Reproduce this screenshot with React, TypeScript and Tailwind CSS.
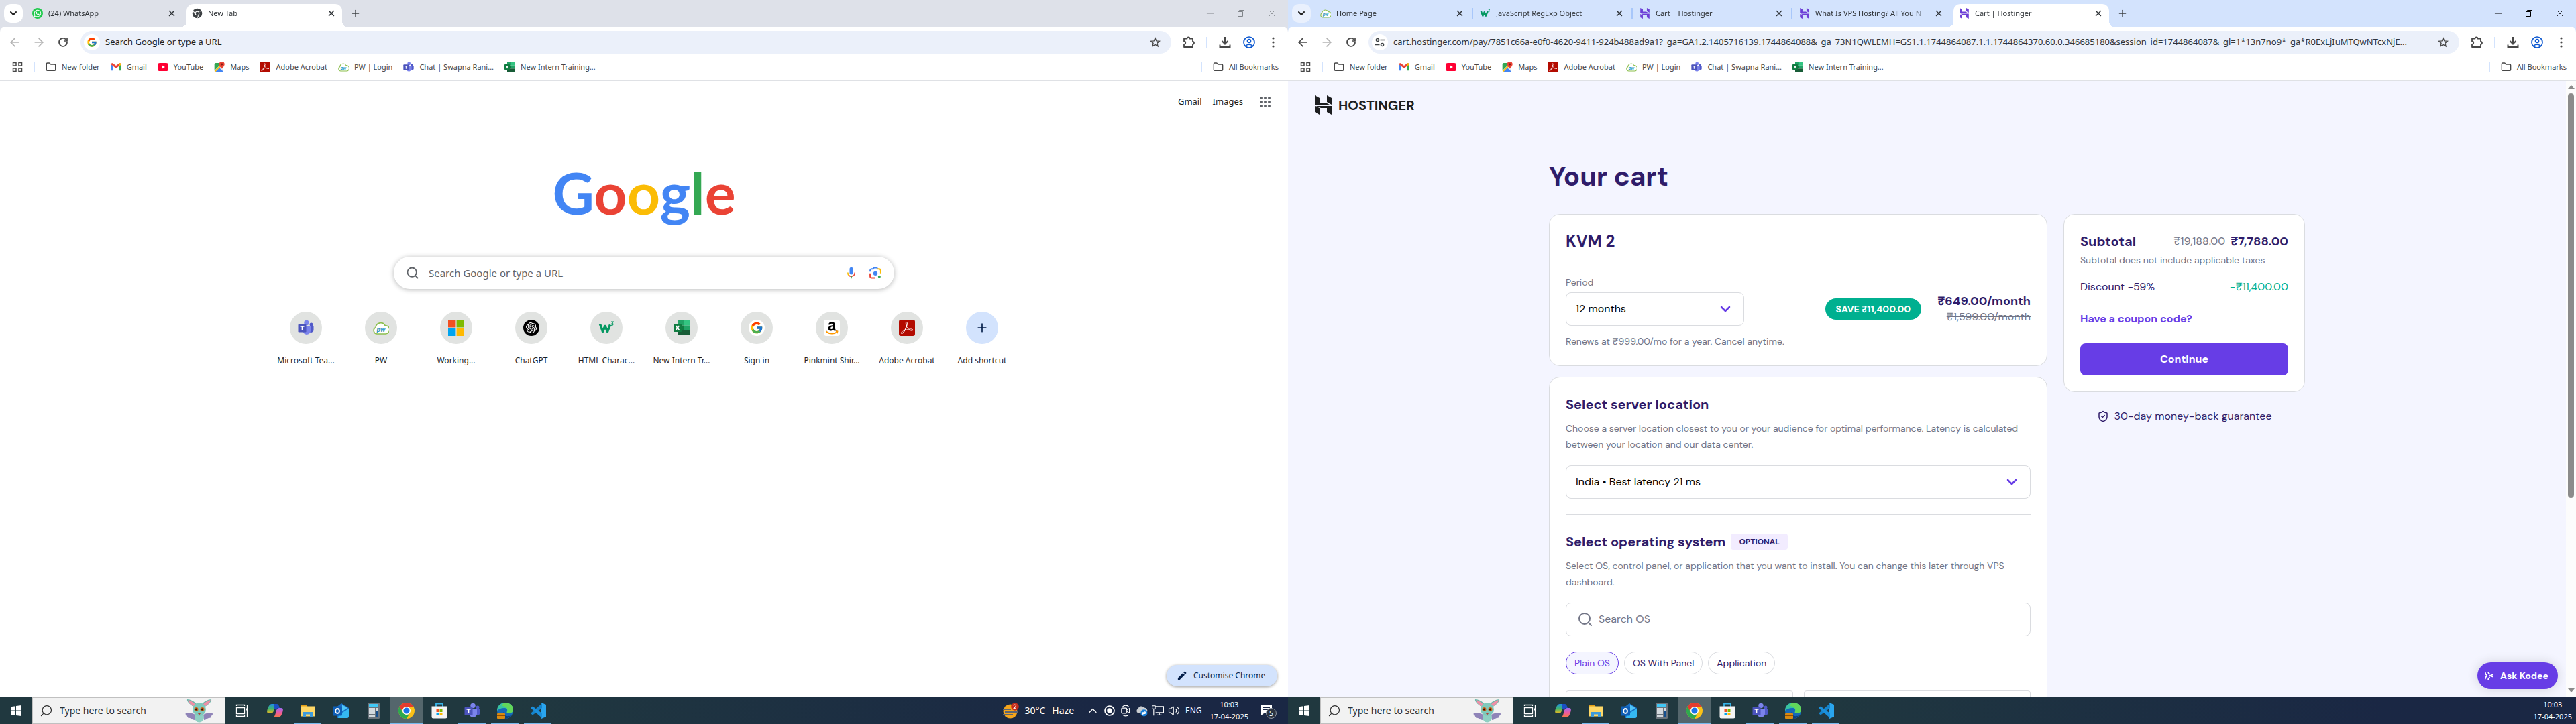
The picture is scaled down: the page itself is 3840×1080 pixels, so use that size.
import type { ReactNode } from "react";
import {
  SiAdobeacrobatreader,
  SiHostinger,
  SiOpenai,
} from "react-icons/si";
import { FaAmazon, FaWhatsapp } from "react-icons/fa6";
import { FcGoogle } from "react-icons/fc";
import {
  ArrowLeft,
  ArrowRight,
  ChevronDown,
  ChevronUp,
  Folder,
  Minus,
  Plus,
  Search,
  ShieldCheck,
  Volume2,
  X,
} from "lucide-react";

/* ---------- brand and system drawings ---------- */

type IconProps = { className?: string };

const WhatsApp = ({ className = "size-4" }: IconProps) => (
  <span className={`flex items-center justify-center rounded-full bg-[#1fc94c] text-white ${className}`}>
    <FaWhatsapp className="size-3" />
  </span>
);

const ChromeMono = () => (
  <svg viewBox="0 0 24 24" className="size-4 text-[#3c4043]">
    <circle cx="12" cy="12" r="11" fill="currentColor" />
    <path d="M12 7h10M7.7 14.5L2.8 6M16.3 14.5L11.5 23" stroke="#fff" strokeWidth="1.6" />
    <circle cx="12" cy="12" r="5" fill="#fff" />
    <circle cx="12" cy="12" r="3.4" fill="currentColor" />
  </svg>
);

const ChromeColor = () => (
  <svg viewBox="0 0 24 24" className="size-6">
    <circle cx="12" cy="12" r="12" fill="#fbc116" />
    <path d="M12 0a12 12 0 0 1 10.4 6H12a6 6 0 0 0-5.2 9L1.6 6A12 12 0 0 1 12 0z" fill="#e33b2e" />
    <path d="M1.6 6l5.2 9a6 6 0 0 0 10.4 0L12 24A12 12 0 0 1 1.6 6z" fill="#2da94f" />
    <circle cx="12" cy="12" r="6" fill="#fff" />
    <circle cx="12" cy="12" r="4.6" fill="#1a73e8" />
  </svg>
);

const Gmail = () => (
  <svg viewBox="0 0 24 24" className="size-4">
    <path d="M1 20V6l5 4v10z" fill="#4285f4" />
    <path d="M23 20V6l-5 4v10z" fill="#34a853" />
    <path d="M1 6.500V6c0-2.500 2.500-3.500 4.500-2L12 9l6.500-5C20.500 2.500 23 3.500 23 6v.5L12 15z" fill="#ea4335" />
    <path d="M18 4.400C20.500 2.500 23 3.500 23 6v1.500l-5 3.500z" fill="#fbbc04" />
  </svg>
);

const YouTube = () => (
  <svg viewBox="0 0 24 24" className="size-4">
    <rect y="3" width="24" height="18" rx="5" fill="#f03" />
    <path d="M9.500 8l7 4-7 4z" fill="#fff" />
  </svg>
);

const Maps = () => (
  <svg viewBox="0 0 24 24" className="size-4">
    <rect x="1" y="3" width="20" height="20" rx="3" fill="#e8eaed" />
    <path d="M1 20L18 3H4a3 3 0 0 0-3 3z" fill="#34a853" />
    <path d="M3 23L12 14l9 8a3 3 0 0 1-2 1z" fill="#4285f4" />
    <path d="M2 22L20 4" stroke="#fbbc04" strokeWidth="3" />
    <path d="M17.500 0a6 6 0 0 1 6 6c0 4-6 9.500-6 9.500S11.500 10 11.500 6a6 6 0 0 1 6-6z" fill="#ea4335" />
    <circle cx="17.500" cy="6" r="2.200" fill="#7f1d12" />
  </svg>
);

const Acrobat = ({ className = "size-4" }: IconProps) => (
  <span className={`flex items-center justify-center rounded-[3px] bg-[#b30b00] text-white ${className}`}>
    <SiAdobeacrobatreader className="size-3/4" />
  </span>
);

const Pw = ({ className = "size-4" }: IconProps) => (
  <svg viewBox="0 0 24 24" className={className}>
    <path
      d="M6 21a5 5 0 0 1-2-9.500A7.500 7.500 0 0 1 18 8.500a6 6 0 0 1 1 12.500z"
      fill="#fff"
      stroke="#8cbf4d"
      strokeWidth="1.600"
    />
    <text x="12" y="17.500" textAnchor="middle" fontFamily="Lato" fontStyle="italic" fontWeight="900" fontSize="10" fill="#2b9bc4">
      pw
    </text>
  </svg>
);

const Teams = ({ className = "size-4" }: IconProps) => (
  <svg viewBox="0 0 24 24" className={className}>
    <circle cx="20" cy="7" r="2.500" fill="#5059c9" />
    <path d="M17 10h6.500v6a4 4 0 0 1-6.500 2z" fill="#5059c9" />
    <circle cx="13" cy="4.500" r="3.700" fill="#7b83eb" />
    <path d="M8 10h11v7a6 6 0 0 1-11 2z" fill="#7b83eb" />
    <rect x="0.500" y="6.500" width="12" height="12" rx="1.200" fill="#4b53bc" />
    <path d="M3.500 10h6M6.500 10v6" stroke="#fff" strokeWidth="1.700" />
  </svg>
);

const Excel = ({ className = "size-4" }: IconProps) => (
  <svg viewBox="0 0 24 24" className={className}>
    <rect x="6" y="1" width="9" height="7.500" fill="#21a366" />
    <rect x="15" y="1" width="9" height="7.500" fill="#33c481" />
    <rect x="6" y="8.500" width="9" height="7" fill="#107c41" />
    <rect x="15" y="8.500" width="9" height="7" fill="#21a366" />
    <rect x="6" y="15.500" width="18" height="7.500" fill="#185c37" />
    <rect x="0" y="6" width="12" height="12" rx="1" fill="#107c41" />
    <path d="M3.500 9l5 6.500M8.500 9l-5 6.500" stroke="#fff" strokeWidth="1.700" />
  </svg>
);

const Microsoft = ({ className = "size-6" }: IconProps) => (
  <svg viewBox="0 0 24 24" className={className}>
    <path d="M0 0h11.400v11.400H0z" fill="#f25022" />
    <path d="M12.600 0H24v11.400H12.600z" fill="#7fba00" />
    <path d="M0 12.600h11.400V24H0z" fill="#00a4ef" />
    <path d="M12.600 12.600H24V24H12.600z" fill="#ffb900" />
  </svg>
);

const W3 = ({ className = "size-4" }: IconProps) => (
  <svg viewBox="0 0 24 24" className={className}>
    <path d="M2.500 6.500l4 11 3.500-8 3.500 8 4-10" fill="none" stroke="#059862" strokeWidth="3.600" strokeLinejoin="round" />
    <path d="M19 3h3.200l-1.800 2.300c2 0 2.300 2.900-.2 3.100-.8 0-1.200-.2-1.500-.7" fill="none" stroke="#059862" strokeWidth="1.200" />
  </svg>
);

const HostingerMark = () => <SiHostinger className="size-4 text-[#6d3fd6]" />;

const AppsGrid = () => (
  <svg viewBox="0 0 16 16" className="size-4" fill="none" stroke="#474747" strokeWidth="1.500">
    <rect x="1.500" y="1.500" width="4.500" height="4.500" />
    <rect x="10" y="1.500" width="4.500" height="4.500" />
    <rect x="1.500" y="10" width="4.500" height="4.500" />
    <rect x="10" y="10" width="4.500" height="4.500" />
  </svg>
);

const Reload = () => (
  <svg viewBox="0 0 20 20" className="size-5" fill="none" stroke="#474747" strokeWidth="1.700">
    <path d="M15.500 7.500A6 6 0 1 0 16 10" />
    <path d="M16 3.500v4.500h-4.500" />
  </svg>
);

const Tune = () => (
  <svg viewBox="0 0 16 16" className="size-4" fill="none" stroke="#3c4043" strokeWidth="1.600">
    <circle cx="4.500" cy="4.500" r="2" />
    <path d="M8.500 4.500H15M1 11.500h6.500" />
    <circle cx="11.500" cy="11.500" r="2" />
  </svg>
);

const Star = () => (
  <svg viewBox="0 0 20 20" className="size-4" fill="none" stroke="#474747" strokeWidth="1.800">
    <path d="M10 2.200l2.300 5.200 5.700.5-4.300 3.800 1.300 5.600-5-3-5 3 1.300-5.600L2 7.900l5.700-.5z" />
  </svg>
);

const Puzzle = () => (
  <svg viewBox="0 0 20 20" className="size-5" fill="none" stroke="#474747" strokeWidth="1.800">
    <path d="M3 4.500h4.500a2 2 0 0 1 4 0H16v4.300a2 2 0 0 1 0 4V17H3v-4c3 0 3-4.500 0-4.500z" strokeLinejoin="round" />
  </svg>
);

const Download = () => (
  <svg viewBox="0 0 20 20" className="size-5" fill="none" stroke="#474747" strokeWidth="2">
    <path d="M10 2v10M5.500 8l4.500 4.500L14.500 8M2.500 13.500V17h15v-3.500" />
  </svg>
);

const Profile = () => (
  <svg viewBox="0 0 20 20" className="size-5" fill="none" stroke="#0b57d0" strokeWidth="1.700">
    <circle cx="10" cy="10" r="8" />
    <circle cx="10" cy="8" r="2.500" />
    <path d="M4.500 15.500c2.500-3 8.500-3 11 0" />
  </svg>
);

const Dots = () => (
  <svg viewBox="0 0 20 20" className="size-5" fill="#474747">
    <circle cx="10" cy="4" r="1.600" />
    <circle cx="10" cy="10" r="1.600" />
    <circle cx="10" cy="16" r="1.600" />
  </svg>
);

const Restore = () => (
  <svg viewBox="0 0 12 12" className="size-3" fill="none" stroke="currentColor">
    <path d="M1.500 3.500h7v7h-7zM3.500 3V1.500h7v7H9" />
  </svg>
);

/* ---------- browser chrome ---------- */

type Tab = { icon: ReactNode; title: string };

function TabStrip({ tabs, focused }: { tabs: Tab[]; focused: boolean }) {
  const last = tabs.length - 1;
  return (
    <div className={`flex h-10 shrink-0 items-start pl-1.5 pt-1.5 ${focused ? "bg-[#d3e3fd]" : "bg-[#dee1e9]"}`}>
      <button
        aria-label="Search tabs"
        className={`mr-1.5 flex size-7 items-center justify-center rounded-[10px] ${focused ? "bg-[#e9f0fd]" : "bg-white"}`}
      >
        <ChevronDown className="size-4 text-[#1f1f1f]" strokeWidth={3} />
      </button>
      <div className="flex gap-1.5">
        {tabs.map((tab, i) => (
          <div
            key={i}
            className={`relative flex h-[34px] w-[232px] items-start rounded-t-[10px] px-2 pt-1.5 ${i === last ? "bg-white" : ""}`}
          >
            {i === last && (
              <>
                <span className="absolute -left-2 bottom-0 size-2 bg-[radial-gradient(circle_at_0_0,transparent_8px,white_8px)]" />
                <span className="absolute -right-2 bottom-0 size-2 bg-[radial-gradient(circle_at_100%_0,transparent_8px,white_8px)]" />
              </>
            )}
            {i < last - 1 && <span className="absolute -right-1 top-1.5 h-4 w-0.5 bg-[#a8c7fa]" />}
            <span className="flex size-4 shrink-0 items-center justify-center">{tab.icon}</span>
            <span className="mx-2 min-w-0 flex-1 whitespace-nowrap text-[11px] leading-4 text-[#303438] [mask-image:linear-gradient(to_right,black_85%,transparent)]">
              {tab.title}
            </span>
            <button aria-label="Close tab" className="flex size-4 items-center justify-center text-[#303438]">
              <X className="size-3.5" strokeWidth={2.5} />
            </button>
          </div>
        ))}
      </div>
      <button aria-label="New tab" className="ml-3 mt-1.5 flex size-4 items-center justify-center text-[#3c4043]">
        <Plus className="size-4" />
      </button>
      <div className={`ml-auto flex h-7 items-center gap-8 pr-4 ${focused ? "text-black" : "text-[#808489]"}`}>
        <button aria-label="Minimise">
          <Minus className="size-4" strokeWidth={1.5} />
        </button>
        <button aria-label="Restore">
          <Restore />
        </button>
        <button aria-label="Close">
          <X className="size-4" strokeWidth={1.2} />
        </button>
      </div>
    </div>
  );
}

const bookmarks: Tab[] = [
  { icon: <Folder className="size-4 text-[#474747]" strokeWidth={2} />, title: "New folder" },
  { icon: <Gmail />, title: "Gmail" },
  { icon: <YouTube />, title: "YouTube" },
  { icon: <Maps />, title: "Maps" },
  { icon: <Acrobat />, title: "Adobe Acrobat" },
  { icon: <Pw />, title: "PW | Login" },
  { icon: <Teams />, title: "Chat | Swapna Rani..." },
  { icon: <Excel />, title: "New Intern Training..." },
];

function Toolbar({ focused, url, hint, badge }: { focused: boolean; url?: string; hint?: string; badge: ReactNode }) {
  return (
    <div className={focused ? "bg-[#d3e3fd]" : "bg-[#dee1e9]"}>
      <div className="rounded-t-lg bg-white">
        <div className="flex h-10 items-center gap-4 px-3 pt-1.5">
          <button aria-label="Back">
            <ArrowLeft className={`size-5 ${focused ? "text-[#474747]" : "text-[#b4b4b4]"}`} />
          </button>
          <button aria-label="Forward">
            <ArrowRight className="size-5 text-[#b4b4b4]" />
          </button>
          <button aria-label="Reload">
            <Reload />
          </button>
          <div className="flex h-[34px] min-w-0 flex-1 items-center rounded-full bg-[#ebf0fa] pl-[5px] pr-4">
            <span className="flex size-6 shrink-0 items-center justify-center rounded-full bg-white">{badge}</span>
            <input
              aria-label="Address"
              defaultValue={url}
              placeholder={hint}
              className="mx-2 min-w-0 flex-1 text-ellipsis bg-transparent text-[13px] text-[#303438] outline-none placeholder:text-[#1f1f1f]"
            />
            <button aria-label="Bookmark this tab">
              <Star />
            </button>
          </div>
          <button aria-label="Extensions">
            <Puzzle />
          </button>
          <span className="h-4 w-0.5 bg-[#d3e3fd]" />
          <button aria-label="Downloads">
            <Download />
          </button>
          <button aria-label="Profile">
            <Profile />
          </button>
          <button aria-label="Menu">
            <Dots />
          </button>
        </div>
        <nav className="flex h-[41px] items-center gap-4 border-b border-[#dfe1e5] pl-[18px] pr-3.5 text-[11px] text-[#474747]">
          <AppsGrid />
          <span className="h-4 w-0.5 bg-[#d3e3fd]" />
          {bookmarks.map((b) => (
            <a key={b.title} href="#" className="flex items-center gap-2">
              {b.icon}
              {b.title}
            </a>
          ))}
          <span className="ml-auto h-4 w-0.5 bg-[#d3e3fd]" />
          <a href="#" className="flex items-center gap-2">
            <Folder className="size-4 text-[#474747]" />
            All Bookmarks
          </a>
        </nav>
      </div>
    </div>
  );
}

/* ---------- new tab page ---------- */

const shortcuts: Tab[] = [
  { icon: <Teams className="size-6" />, title: "Microsoft Tea..." },
  { icon: <Pw className="size-6" />, title: "PW" },
  { icon: <Microsoft />, title: "Working..." },
  {
    icon: (
      <span className="flex size-6 items-center justify-center rounded-full bg-black text-white">
        <SiOpenai className="size-4" />
      </span>
    ),
    title: "ChatGPT",
  },
  { icon: <W3 className="size-6" />, title: "HTML Charac..." },
  { icon: <Excel className="size-6" />, title: "New Intern Tr..." },
  {
    icon: (
      <span className="flex size-6 items-center justify-center rounded-full bg-white">
        <FcGoogle className="size-5" />
      </span>
    ),
    title: "Sign in",
  },
  {
    icon: (
      <span className="relative flex size-6 items-center justify-center rounded-[4px] bg-white text-black">
        <FaAmazon className="size-5" />
        <svg viewBox="0 0 24 24" className="absolute inset-0 size-6" fill="none">
          <path d="M2 17h20v5H2z" fill="#fff" />
          <path d="M3.500 17.500c5 4 12 4 16.500.5M18 17l2.500.5-.8 2.700" stroke="#ff9900" strokeWidth="1.800" />
        </svg>
      </span>
    ),
    title: "Pinkmint Shir...",
  },
  { icon: <Acrobat className="size-6" />, title: "Adobe Acrobat" },
  { icon: <Plus className="size-5 text-[#041e49]" />, title: "Add shortcut" },
];

function NewTabPage() {
  return (
    <main className="relative flex min-h-0 flex-1 flex-col items-center bg-white">
      <header className="flex h-[62px] w-full shrink-0 items-center justify-end gap-4 pr-[25px] text-[13px] text-[#1f1f1f]">
        <a href="#">Gmail</a>
        <a href="#">Images</a>
        <svg viewBox="0 0 18 18" className="ml-2 size-[18px]" fill="#5f6368">
          {[3, 9, 15].map((y) => [3, 9, 15].map((x) => <circle key={`${x}-${y}`} cx={x} cy={y} r="2" />))}
        </svg>
      </header>
      <h1 className="pt-2 font-['Lato'] text-[86px] font-bold leading-[192px]">
        <span className="text-[#4285f4]">G</span>
        <span className="text-[#ea4335]">o</span>
        <span className="text-[#fbbc05]">o</span>
        <span className="text-[#4285f4]">g</span>
        <span className="text-[#34a853]">l</span>
        <span className="text-[#ea4335]">e</span>
      </h1>
      <form className="flex h-12 w-[746px] items-center rounded-full bg-white pl-[18px] pr-[18px] shadow-[0_1px_6px_1px_rgba(32,33,36,0.26)]">
        <Search className="size-5 text-[#5f6368]" strokeWidth={2.2} />
        <input
          aria-label="Search Google"
          placeholder="Search Google or type a URL"
          className="mx-3.5 min-w-0 flex-1 bg-transparent text-[15px] outline-none placeholder:text-[#5f6368]"
        />
        <button type="button" aria-label="Voice search">
          <svg viewBox="0 0 24 24" className="size-5">
            <rect x="9" y="2" width="6" height="13" rx="3" fill="#4285f4" />
            <path d="M5.800 11.500c0 3 1 4.500 2.200 5.300" fill="none" stroke="#fbbc04" strokeWidth="2" />
            <path d="M7.500 16.500c3 2.300 6 2.300 9 0 1.200-1 1.800-3 1.800-5" fill="none" stroke="#ea4335" strokeWidth="2" />
            <path d="M12 18v4" stroke="#34a853" strokeWidth="2" />
          </svg>
        </button>
        <button type="button" aria-label="Search by image" className="ml-4">
          <svg viewBox="0 0 24 24" className="size-5" fill="none" strokeWidth="2.400">
            <path d="M2.500 10V8a3 3 0 0 1 3-3H8l1.500-2h5L16 5" stroke="#4285f4" />
            <path d="M16 5h2.500a3 3 0 0 1 3 3v5" stroke="#fbbc04" />
            <path d="M2.500 13v5a3 3 0 0 0 3 3H12" stroke="#ea4335" />
            <circle cx="12" cy="13" r="3.800" fill="#4285f4" />
            <circle cx="19" cy="19" r="2.400" fill="#34a853" />
          </svg>
        </button>
      </form>
      <ul className="mt-[34px] flex">
        {shortcuts.map((s, i) => (
          <li key={s.title} className="w-28 text-center text-xs text-[#1f1f1f]">
            <a href="#" className="flex flex-col items-center">
              <span
                className={`flex size-12 items-center justify-center rounded-full ${i === shortcuts.length - 1 ? "bg-[#d3e3fd]" : "bg-[#e1e3e1]"}`}
              >
                {s.icon}
              </span>
              <span className="mt-4 leading-[18px]">{s.title}</span>
            </a>
          </li>
        ))}
      </ul>
      <button className="absolute bottom-4 right-4 flex h-8 w-[165px] items-center gap-2.5 rounded-full bg-[#d3e3fd] pl-4 text-xs text-[#041e49] shadow-[0_1px_4px_rgba(0,0,0,0.4)]">
        <svg viewBox="0 0 16 16" className="size-3.5" fill="currentColor">
          <path d="M1 12l8.500-8.500 3 3L4 15H1zM10.500 2.500l1.500-1.500a1 1 0 0 1 1.500 0L15 2.500a1 1 0 0 1 0 1.500L13.500 5.500z" />
        </svg>
        Customise Chrome
      </button>
    </main>
  );
}

/* ---------- cart page ---------- */

function SelectBox({ id, label, value, className }: { id: string; label?: string; value: string; className: string }) {
  return (
    <div className={`relative h-[50px] ${className}`}>
      <select
        id={id}
        aria-label={label}
        defaultValue={value}
        className="size-full appearance-none rounded-lg border border-[#dadce0] bg-white pl-3.5 pr-12 text-base text-black"
      >
        <option>{value}</option>
      </select>
      <ChevronDown
        className="pointer-events-none absolute right-4 top-[13px] size-6 text-[#673de6]"
        strokeWidth={2.5}
      />
    </div>
  );
}

const osKinds = ["Plain OS", "OS With Panel", "Application"];

function CartPage() {
  return (
    <div className="flex min-h-0 flex-1">
      <div className="relative min-w-0 flex-1 overflow-hidden bg-[#f4f5ff] font-['DM_Sans','Open_Sans',sans-serif] text-[#2f1c6a]">
        <header className="flex items-center gap-2.5 pl-10 pt-[21px] text-[#1d1e20]">
          <svg viewBox="0 0 25 29" className="h-[29px] w-[25px]" fill="currentColor">
            <path d="M0 0l7 4v7l9 0 8 4H0zM18 0l7 4v10l-7-4zM25 29l-7-4v-6H9l-8-3h24zM0 16l7 3v10l-7-4z" />
          </svg>
          <span className="text-xl font-bold leading-7">HOSTINGER</span>
        </header>
        <main className="mx-auto max-w-[1127px] pt-[68px]">
          <h1 className="text-[40px] font-bold leading-[48px]">Your cart</h1>
          <div className="mt-8 grid grid-cols-[1fr_360px] items-start gap-6">
            <div className="flex flex-col gap-4">
              <section className="rounded-2xl border border-[#dadce0] bg-white p-6">
                <h2 className="text-2xl font-bold leading-8">KVM 2</h2>
                <hr className="mb-4 mt-4 border-[#dadce0]" />
                <label htmlFor="period" className="block text-sm leading-6 text-[#727586]">
                  Period
                </label>
                <div className="mt-[3px] flex items-center">
                  <SelectBox id="period" value="12 months" className="w-[266px]" />
                  <span className="ml-auto mr-6 rounded-full bg-[#00b090] px-4 text-sm font-bold leading-8 text-white">
                    SAVE ₹11,400.00
                  </span>
                  <div className="text-right leading-6">
                    <p className="text-lg font-bold leading-6">₹649.00/month</p>
                    <p className="text-base leading-6 text-[#727586] line-through">₹1,599.00/month</p>
                  </div>
                </div>
                <p className="mt-[11px] text-sm leading-6 text-[#727586]">Renews at ₹999.00/mo for a year. Cancel anytime.</p>
              </section>

              <section className="rounded-2xl border border-[#dadce0] bg-white p-6">
                <h2 className="text-xl font-bold leading-8">Select server location</h2>
                <p className="mt-2 text-sm leading-6 text-[#727586]">
                  Choose a server location closest to you or your audience for optimal performance. Latency is calculated
                  between your location and our data center.
                </p>
                <SelectBox
                  id="location"
                  label="Server location"
                  value="India • Best latency 21 ms"
                  className="mt-[19px] w-full"
                />
                <hr className="mt-[23px] border-[#dadce0]" />
                <div className="mt-6 flex items-center gap-2">
                  <h2 className="text-xl font-bold leading-8">Select operating system</h2>
                  <span className="rounded bg-[#f2ecff] px-3 text-xs font-bold leading-6">OPTIONAL</span>
                </div>
                <p className="mt-2 text-sm leading-6 text-[#727586]">
                  Select OS, control panel, or application that you want to install. You can change this later through VPS
                  dashboard.
                </p>
                <label className="mt-[19px] flex h-[50px] items-center gap-2 rounded-lg border border-[#dadce0] pl-4">
                  <Search className="size-6 text-[#727586]" />
                  <input
                    aria-label="Search OS"
                    placeholder="Search OS"
                    className="min-w-0 flex-1 bg-transparent text-base outline-none placeholder:text-[#727586]"
                  />
                </label>
                <div className="mt-[23px] flex gap-2">
                  {osKinds.map((kind, i) => (
                    <button
                      key={kind}
                      className={`h-[34px] rounded-full border px-3 text-sm ${i === 0 ? "border-[#673de6] bg-[#f4f5ff] text-[#673de6]" : "border-[#dadce0] bg-white"}`}
                    >
                      {kind}
                    </button>
                  ))}
                </div>
                <div className="mt-6 grid grid-cols-2 gap-4">
                  <div className="h-24 rounded border border-[#dadce0]" />
                  <div className="h-24 rounded border border-[#dadce0]" />
                </div>
              </section>
            </div>

            <aside>
              <section className="rounded-2xl border border-[#dadce0] bg-white p-6">
                <div className="flex items-center leading-8">
                  <h2 className="mr-auto text-xl font-bold leading-8">Subtotal</h2>
                  <s className="mr-2 text-base text-[#727586]">₹19,188.00</s>
                  <strong className="text-lg font-bold">₹7,788.00</strong>
                </div>
                <p className="text-sm leading-6 text-[#727586]">Subtotal does not include applicable taxes</p>
                <div className="mt-4 flex justify-between text-base leading-6">
                  <span>Discount -59%</span>
                  <span className="text-[#00b090]">-₹11,400.00</span>
                </div>
                <a href="#" className="mt-6 block text-base font-bold leading-6 text-[#673de6]">
                  Have a coupon code?
                </a>
                <button className="mt-6 h-12 w-full rounded-lg bg-[#673de6] text-base font-bold text-white">Continue</button>
              </section>
              <p className="mt-6 flex items-center justify-center gap-2 text-base leading-6">
                <ShieldCheck className="size-[18px]" />
                30-day money-back guarantee
              </p>
            </aside>
          </div>
        </main>
        <button className="absolute bottom-3 right-3 flex h-10 w-[120px] items-center gap-2.5 rounded-full bg-[#673de6] pl-2.5 text-sm font-bold text-white shadow-[0_0_16px_rgba(29,30,32,0.16)]">
          <svg viewBox="0 0 16 16" className="size-3.5" fill="none" stroke="currentColor" strokeWidth="2">
            <path d="M2 2c0 3 .5 4 2.500 5.500M2 14c0-3 .5-4 2.500-5.500M7 1c0 2 1 3.500 3 4.500M7 15c0-2 1-3.500 3-4.500M9 8c3 0 4-1 6-2M9 8c3 0 4 1 6 2" />
          </svg>
          Ask Kodee
        </button>
      </div>
      <div className="flex w-[15px] flex-col items-center bg-[#fcfcfc] pb-[7px] pt-1.5">
        <svg viewBox="0 0 10 6" className="h-1.5 w-2.5" fill="#8b8b8b">
          <path d="M5 0l5 6H0z" />
        </svg>
        <span className="mt-1.5 h-2/3 w-[9px] rounded-full bg-[#8b8b8b]" />
        <svg viewBox="0 0 10 6" className="mt-auto h-1.5 w-2.5" fill="#8b8b8b">
          <path d="M5 6L0 0h10z" />
        </svg>
      </div>
    </div>
  );
}

/* ---------- taskbar ---------- */

const Bat = () => (
  <svg viewBox="0 0 44 36" className="h-9 w-11">
    <path d="M16 24c-6-3-12-3-15-1 3 1 3 5 5 6 3-1 5 3 9 3zM28 24c6-3 12-3 15-1-3 1-3 5-5 6-3-1-5 3-9 3z" fill="#8f84b8" />
    <path d="M15 13C8 9 3 4 4 1c4 0 12 3 15 9zM29 13c7-4 12-9 11-12-4 0-12 3-15 9z" fill="#6cb8ac" />
    <path d="M14 12C9 9 5 5 5.500 2 9 3 15 6 17 10zM30 12c5-3 9-7 8.500-10C35 3 29 6 27 10z" fill="#ee8fa6" />
    <ellipse cx="22" cy="28" rx="7" ry="7.500" fill="#8fd0c3" />
    <circle cx="22" cy="16" r="10" fill="#7fc9bb" />
    <circle cx="17.500" cy="16" r="3" fill="#c9631a" />
    <circle cx="26.500" cy="16" r="3" fill="#c9631a" />
    <circle cx="17.500" cy="16" r="1.600" fill="#2b1509" />
    <circle cx="26.500" cy="16" r="1.600" fill="#2b1509" />
    <path d="M19.500 21.500h5l-2.500 3z" fill="#b2413a" />
  </svg>
);

const taskIcons: { name: string; open?: boolean; active?: boolean; icon: ReactNode }[] = [
  {
    name: "Task view",
    icon: (
      <svg viewBox="0 0 20 20" className="size-5" fill="none" stroke="#fff" strokeWidth="1.300">
        <path d="M1.500 3V1.500h12V3M1.500 17v1.500h12V17M1.500 5.500h12v9h-12zM17.500 1v18" />
        <path d="M17.500 6.500v3" strokeWidth="3" />
      </svg>
    ),
  },
  {
    name: "Copilot",
    icon: (
      <svg viewBox="0 0 24 24" className="size-6">
        <defs>
          <linearGradient id="copilotLeft" x1="0" y1="0" x2="0" y2="1">
            <stop offset="0" stopColor="#1f8fe8" />
            <stop offset="0.500" stopColor="#3fb56c" />
            <stop offset="1" stopColor="#f5b719" />
          </linearGradient>
          <linearGradient id="copilotRight" x1="0" y1="0" x2="0" y2="1">
            <stop offset="0" stopColor="#9b6bf2" />
            <stop offset="0.500" stopColor="#ee5aa0" />
            <stop offset="1" stopColor="#f77a3c" />
          </linearGradient>
        </defs>
        <path d="M7 2h9c-3 0-4 3-5 7s-2 7-5 7H3c-4 0-3-4-2-7S4 2 7 2z" fill="url(#copilotLeft)" />
        <path d="M17 22H8c3 0 4-3 5-7s2-7 5-7h3c4 0 3 4 2 7s-3 7-6 7z" fill="url(#copilotRight)" />
        <path d="M11 2h4c2 0 3 3 4 6h-1c-3 0-4 1-4.500 3L11 9z" fill="#1b4fc4" />
      </svg>
    ),
  },
  {
    name: "File Explorer",
    open: true,
    icon: (
      <svg viewBox="0 0 24 24" className="size-6">
        <path d="M1 4h9l2 2.500h-11z" fill="#e3a018" />
        <rect x="1" y="5.500" width="22" height="15" rx="1" fill="#ffd867" />
        <path d="M5 21v-7h14v7h-4v-3.500H9V21z" fill="#3f9bdc" />
      </svg>
    ),
  },
  {
    name: "Outlook",
    icon: (
      <svg viewBox="0 0 24 24" className="size-6">
        <path d="M4 8l9-7 11 7v12a3 3 0 0 1-3 3H7z" fill="#1a6fc4" />
        <path d="M9 18l15-9v11a3 3 0 0 1-3 3H8z" fill="#35b8f1" />
        <path d="M14 3l8 5-8 5z" fill="#4fc5f7" />
        <rect x="0" y="5.500" width="14" height="14" rx="1.500" fill="#0f5fb8" />
        <ellipse cx="7" cy="12.500" rx="3" ry="3.500" fill="none" stroke="#fff" strokeWidth="1.800" />
      </svg>
    ),
  },
  {
    name: "Calculator",
    icon: (
      <svg viewBox="0 0 24 24" className="size-6">
        <rect x="3" width="18" height="24" rx="1.500" fill="#6b747c" />
        <rect x="5" y="2" width="14" height="4" fill="#41c8f5" />
        {[8, 13, 18].map((y) => [5, 10].map((x) => <rect key={`${x}${y}`} x={x} y={y} width="4" height="4" fill="#d3d9de" />))}
        <rect x="15" y="8" width="4" height="4" fill="#d3d9de" />
        <rect x="15" y="13" width="4" height="9" fill="#16508f" />
      </svg>
    ),
  },
  { name: "Google Chrome", open: true, active: true, icon: <ChromeColor /> },
  {
    name: "Microsoft Store",
    icon: (
      <svg viewBox="0 0 24 24" className="size-6">
        <path d="M7 6V1.500h10V6" fill="none" stroke="#36b5ea" strokeWidth="1.800" />
        <path d="M0.500 5.500h23V21a2.500 2.500 0 0 1-2.500 2.500H3A2.500 2.500 0 0 1 .5 21z" fill="#f4f4f4" />
        <path d="M7.500 10h4v4h-4z" fill="#f25022" />
        <path d="M12.500 10h4v4h-4z" fill="#7fba00" />
        <path d="M7.500 15h4v4h-4z" fill="#00a4ef" />
        <path d="M12.500 15h4v4h-4z" fill="#ffb900" />
      </svg>
    ),
  },
  { name: "Teams", open: true, icon: <Teams className="size-6" /> },
  {
    name: "Edge",
    open: true,
    icon: (
      <svg viewBox="0 0 24 24" className="size-6">
        <circle cx="12" cy="12" r="12" fill="#1569b8" />
        <path d="M0 12C0 5 5 0 12 0s12 5 12 10c0 4-3 6-6 6s-4-1-3-3c1-3-1-5-4-5-5 0-9 2-11 4z" fill="#39c3a0" />
        <path d="M12 0c7 0 12 5 12 10 0 4-3 6-6 6s-4-1-3-3c2-5-3-8-8-8 1-3 3-5 5-5z" fill="#62d65a" />
        <path d="M10 14c0 5 4 8 11 5-3 4-7 5-9 5-4 0-6-5-2-10z" fill="#0c3f7d" />
        <rect x="0" y="16" width="12" height="8" rx="1" fill="#d98a10" />
        <path d="M0 19.500h12" stroke="#8a4d05" />
      </svg>
    ),
  },
  {
    name: "Visual Studio Code",
    open: true,
    icon: (
      <svg viewBox="0 0 24 24" className="size-6">
        <path d="M17 0l7 3v18l-7 3z" fill="#2aa5ee" />
        <path d="M18 1v7L4 18.500 1 16z" fill="#1584cc" />
        <path d="M18 23v-7L4 5.500 1 8z" fill="#1b8fdb" />
      </svg>
    ),
  },
];

function Clock({ className = "" }: IconProps) {
  return (
    <div className={`text-center text-[11px] leading-[18px] ${className}`}>
      <p>10:03</p>
      <p>17-04-2025</p>
    </div>
  );
}

function Taskbar({ tray }: { tray: boolean }) {
  return (
    <footer className="flex h-10 shrink-0 items-stretch bg-linear-to-r from-[#20383f] from-40% to-[#1a2744] to-85% text-white">
      <button aria-label="Start" className="flex w-12 items-center justify-center">
        <svg viewBox="0 0 16 16" className="size-4" fill="#fff">
          <path d="M0 2.200L7 1.200V7.600H0zM8 1l8-1v7.600H8zM0 8.500h7v6.400l-7-1zM8 8.500h8V16l-8-1z" />
        </svg>
      </button>
      <label className="flex w-72 items-center gap-2.5 border border-[#c0c0c0] bg-[#f2f2f2] pl-2.5 pr-4">
        <Search className="size-5 -scale-x-100 text-[#303030]" strokeWidth={1.5} />
        <input
          aria-label="Type here to search"
          placeholder="Type here to search"
          className="min-w-0 flex-1 bg-transparent text-sm outline-none placeholder:text-[#303030]"
        />
        <Bat />
      </label>
      {taskIcons.map((t) => (
        <button
          key={t.name}
          aria-label={t.name}
          className={`relative flex w-[49px] items-center justify-center ${t.active ? "bg-[#54666c]" : ""}`}
        >
          {t.icon}
          {t.open && <span className={`absolute bottom-0 h-0.5 bg-[#76b9ed] ${t.active ? "inset-x-0" : "inset-x-1"}`} />}
        </button>
      ))}
      {tray ? (
        <div className="ml-auto flex items-center text-sm">
          <svg viewBox="0 0 24 24" className="mr-2 size-6">
            <circle cx="11" cy="13" r="10.500" fill="#f5a51b" />
            <path d="M0 10h12M3 14h19M0 18h15" stroke="#5c6573" strokeWidth="1.800" />
            <circle cx="18" cy="6" r="5.800" fill="#c42b1c" />
            <path d="M16 4.500c.5-2 4-1.500 3.500.5-.3 1.200-2.500 2.500-3.500 3.800h4" fill="none" stroke="#fff" strokeWidth="1.200" />
          </svg>
          <span className="mr-2.5">30°C</span>
          <span className="mr-[18px]">Haze</span>
          <div className="flex items-center gap-1.5">
            <ChevronUp className="size-5" strokeWidth={1.5} />
            <svg viewBox="0 0 16 16" className="size-[18px]" fill="none" stroke="#fff" strokeWidth="1.500">
              <circle cx="8" cy="8" r="6.200" />
              <circle cx="8" cy="8" r="2.600" fill="#fff" />
            </svg>
            <svg viewBox="0 0 16 16" className="size-[18px]" fill="none" stroke="#fff">
              <rect x="2.500" y="4.500" width="7" height="7" rx="1" />
              <path d="M9.500 7l3.500-2v6l-3.500-2M4 2.500c2-2 6-2 8 0M4 13.500c2 2 6 2 8 0" />
            </svg>
            <svg viewBox="0 0 16 16" className="size-[18px]">
              <path d="M3 11a3 3 0 0 1 0-5.500A4.500 4.500 0 0 1 11 4a4 4 0 0 1 3 7z" fill="#c9ccd1" />
              <circle cx="11" cy="11" r="4.500" fill="#1c7fd6" />
              <path d="M9 10.500h4l-1-1.500M13 12H9l1 1.500" stroke="#fff" fill="none" />
            </svg>
            <svg viewBox="0 0 16 16" className="size-[18px]" fill="none" stroke="#fff">
              <path d="M5 2.500h10.500v8H5M0.500 1.500h4v4h-4zM2.500 5.500v9M10 10.500v3M7 13.500h6" />
            </svg>
            <Volume2 className="size-[18px]" strokeWidth={1.5} />
          </div>
          <span className="ml-2 text-xs">ENG</span>
          <Clock className="ml-3" />
          <button aria-label="Notifications" className="relative ml-[18px] mr-4 size-5">
            <svg viewBox="0 0 20 20" className="size-5">
              <path d="M1 2h16v12H5l-4 3z" fill="#fff" />
              <path d="M4 5.500h10M4 8.500h10" stroke="#1a2744" />
            </svg>
            <span className="absolute left-2 top-1.5 flex size-4 items-center justify-center rounded-full border border-[#8d949e] bg-[#2c3340] text-[11px]">
              5
            </span>
          </button>
          <span className="mr-1 h-10 w-px bg-[#5b6578]" />
        </div>
      ) : (
        <div className="ml-auto flex items-center pr-1.5">
          <Clock />
        </div>
      )}
    </footer>
  );
}

/* ---------- desktop ---------- */

const cartUrl =
  "cart.hostinger.com/pay/7851c66a-e0f0-4620-9411-924b488ad9a1?_ga=GA1.2.1405716139.1744864088&_ga_73N1QWLEMH=GS1.1.1744864087.1.1.1744864370.60.0.346685180&session_id=1744864087&_gl=1*13n7no9*_ga*R0ExLjIuMTQwNTcxNjE...";

export default function App() {
  return (
    <div className="flex h-screen overflow-hidden font-['Noto_Sans',sans-serif]">
      <div className="flex min-w-0 flex-1 flex-col">
        <TabStrip
          focused={false}
          tabs={[
            { icon: <WhatsApp />, title: "(24) WhatsApp" },
            { icon: <ChromeMono />, title: "New Tab" },
          ]}
        />
        <Toolbar focused={false} hint="Search Google or type a URL" badge={<FcGoogle className="size-4" />} />
        <NewTabPage />
        <Taskbar tray />
      </div>
      <div className="flex min-w-0 flex-1 flex-col">
        <TabStrip
          focused
          tabs={[
            { icon: <Pw />, title: "Home Page" },
            { icon: <W3 />, title: "JavaScript RegExp Object" },
            { icon: <HostingerMark />, title: "Cart | Hostinger" },
            { icon: <HostingerMark />, title: "What Is VPS Hosting? All You N" },
            { icon: <HostingerMark />, title: "Cart | Hostinger" },
          ]}
        />
        <Toolbar focused url={cartUrl} badge={<Tune />} />
        <CartPage />
        <Taskbar tray={false} />
      </div>
    </div>
  );
}
